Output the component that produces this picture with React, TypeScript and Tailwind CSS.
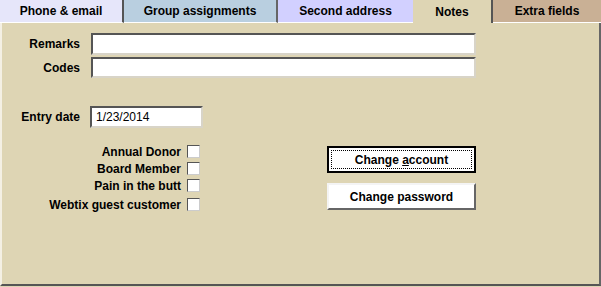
import { useState } from "react";

const tabs = [
  { label: "Phone & email", w: "w-[124px]", bg: "bg-[#e6e6fa]", border: "border-r-2 border-r-[#555]" },
  { label: "Group assignments", w: "w-[154px]", bg: "bg-[#b9cfe0]", border: "border-r-2 border-r-[#666]" },
  { label: "Second address", w: "w-[135px]", bg: "bg-[#d2d0ff]", border: "" },
  { label: "Notes", w: "w-[80px]", bg: "bg-[#ded5b4]", border: "border-r-2 border-r-[#555]", active: true },
  { label: "Extra fields", w: "w-[108px]", bg: "bg-[#c9b095]", border: "" },
];

const flags = ["Annual Donor", "Board Member", "Pain in the butt", "Webtix guest customer"];

const inset =
  "bg-white border-2 border-t-[#555] border-l-[#555] border-b-[#d8d4c8] border-r-[#d8d4c8] outline-none";

export default function App() {
  const [checked, setChecked] = useState<Record<string, boolean>>({});

  return (
    <div className="w-[601px] h-[287px] flex flex-col bg-[#ded5b4] font-['Liberation_Sans',Arial,sans-serif] text-[12px] text-black">
      {/* Tab strip */}
      <div className="flex h-[23px] shrink-0">
        {tabs.map((t) => (
          <div
            key={t.label}
            className={`${t.w} ${t.bg} ${t.border} flex justify-center font-bold ${
              t.active ? "items-start pt-[3px]" : "items-center border-b border-b-white"
            }`}
          >
            {t.label}
          </div>
        ))}
      </div>

      {/* Panel */}
      <div className="flex-1 border-l-2 border-l-[#f4f0e4] border-r-2 border-r-[#666] border-b-2 border-b-[#555] mb-px flex flex-col pt-[10px]">
        <div className="flex flex-col gap-[2px]">
          <div className="flex items-center">
            <span className="w-[78px] text-right font-bold">Remarks</span>
            <input className={`${inset} ml-[11px] w-[385px] h-[22px]`} />
          </div>
          <div className="flex items-center">
            <span className="w-[78px] text-right font-bold">Codes</span>
            <input className={`${inset} ml-[11px] w-[385px] h-[21px]`} />
          </div>
        </div>

        <div className="flex items-center mt-[28px]">
          <span className="w-[78px] text-right font-bold">Entry date</span>
          <input
            defaultValue="1/23/2014"
            className={`${inset} ml-[10px] w-[113px] h-[22px] px-[4px] text-[12px]`}
          />
        </div>

        <div className="flex mt-[15px]">
          <div className="flex flex-col w-[200px]">
            {flags.map((f, i) => (
              <label key={f} className={`flex items-center justify-end h-[17px] ${i === 3 ? "mt-[2px]" : ""}`}>
                <span className="font-bold mr-[6px]">{f}</span>
                <span
                  onClick={() => setChecked({ ...checked, [f]: !checked[f] })}
                  className="w-[13px] h-[13px] bg-white border border-t-[#555] border-l-[#555] border-b-[#ccc] border-r-[#ccc] mr-[2px] flex items-center justify-center text-[10px] leading-none"
                >
                  {checked[f] ? "✓" : ""}
                </span>
              </label>
            ))}
          </div>
          <div className="flex flex-col gap-[10px] ml-[125px] mt-[3px]">
            <button className="w-[149px] h-[27px] bg-white border-2 border-black p-[2px] font-bold">
              <span className="flex w-full h-full items-center justify-center border border-dotted border-black">
                Change&nbsp;<span className="underline">a</span>ccount
              </span>
            </button>
            <button className="w-[149px] h-[27px] bg-white border-2 border-t-[#f4f4f4] border-l-[#f4f4f4] border-b-[#666] border-r-[#666] font-bold">
              Change password
            </button>
          </div>
        </div>
      </div>
    </div>
  );
}
